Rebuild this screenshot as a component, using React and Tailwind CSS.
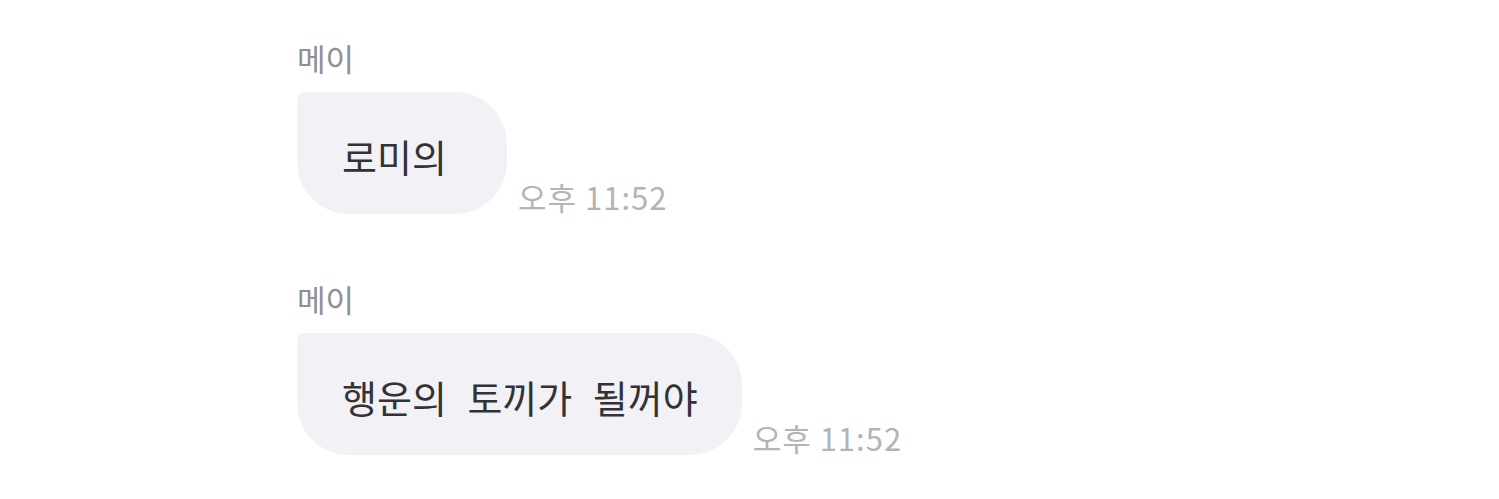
const messages = [
  { name: "메이", text: "로미의", time: "오후 11:52" },
  { name: "메이", text: "행운의 토끼가 될꺼야", time: "오후 11:52" },
];

const font = { fontFamily: '"Noto Sans CJK KR", "Noto Sans", sans-serif' };

const Message = ({ name, text, time }) => (
  <div className="flex flex-col">
    {/* sender */}
    <div className="text-[31px] leading-[36px] text-[#8e8e93]">{name}</div>

    {/* bubble + time */}
    <div className="mt-4 flex items-end gap-[11px]">
      <div className="h-[122px] min-w-[210px] flex items-center pt-1 pl-[45px] pr-[44px] bg-[#f2f2f6] rounded-[52px] rounded-tl-[7px]">
        <span className="text-[38px] text-[#333336] whitespace-nowrap [word-spacing:12px]">{text}</span>
      </div>
      <div className="text-[31px] leading-[30px] mb-[2px] tracking-[1px] text-[#b3b3b8] whitespace-nowrap">
        {time}
      </div>
    </div>
  </div>
);

export default function App() {
  return (
    <div className="w-[1499px] h-[499px] bg-white overflow-hidden" style={font}>
      <div className="pl-[297px] pt-[40px] flex flex-col gap-[67px]">
        {messages.map((m, i) => (
          <Message key={i} {...m} />
        ))}
      </div>
    </div>
  );
}
